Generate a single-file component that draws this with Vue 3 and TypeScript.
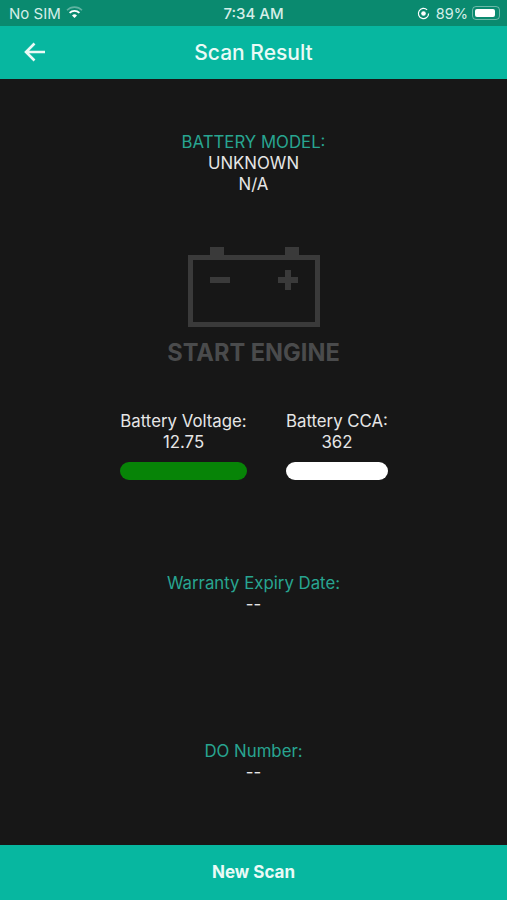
<script setup lang="ts">
const gauges = [
  { label: 'Battery Voltage:', value: '12.75', color: '#078407', width: 127 },
  { label: 'Battery CCA:', value: '362', color: '#ffffff', width: 102 },
]
</script>

<template>
  <div class="screen">
    <div class="status">
      <div class="status-left">
        <span>No SIM</span>
        <svg class="wifi" width="17" height="13" viewBox="0 0 17 13">
          <path d="M1 4.2a10.6 10.6 0 0 1 15 0" fill="none" stroke="#fff" stroke-opacity=".35" stroke-width="1.6" />
          <path d="M3.6 6.9a7 7 0 0 1 9.8 0" fill="none" stroke="#fff" stroke-width="1.8" />
          <path d="M6 9.4a3.6 3.6 0 0 1 5 0l-2.5 2.6z" fill="#fff" />
        </svg>
      </div>
      <span class="time">7:34 AM</span>
      <div class="status-right">
        <svg width="13" height="13" viewBox="0 0 13 13">
          <path d="M11.6 6.5a5.1 5.1 0 1 1-1.5-3.6" fill="none" stroke="#fff" stroke-width="1.2" />
          <circle cx="6.5" cy="6.5" r="2.3" fill="#fff" />
        </svg>
        <span class="pct">89%</span>
        <div class="batt"><div class="batt-fill"></div></div>
      </div>
    </div>

    <header class="bar">
      <svg class="back" width="22" height="20" viewBox="0 0 22 20">
        <path d="M21 10H2M10.5 1.5 2 10l8.5 8.5" fill="none" stroke="#eafaf6" stroke-width="2.6" />
      </svg>
      <h1>Scan Result</h1>
    </header>

    <main class="body">
      <section class="model">
        <div class="accent">BATTERY MODEL:</div>
        <div>UNKNOWN</div>
        <div>N/A</div>
      </section>

      <section class="engine">
        <svg width="133" height="80" viewBox="0 0 133 80">
          <g fill="#3a3a3a">
            <rect x="23" y="0" width="14" height="9" />
            <rect x="98" y="0" width="14" height="9" />
            <path fill-rule="evenodd" d="M1 8h132v72H1zM6 13v62h122V13z" />
            <rect x="23" y="30" width="20" height="6" />
            <rect x="91" y="30" width="20" height="6" />
            <rect x="98" y="23" width="6" height="20" />
          </g>
        </svg>
        <div class="engine-text">START ENGINE</div>
      </section>

      <section class="gauges">
        <div v-for="g in gauges" :key="g.label" class="gauge">
          <div>{{ g.label }}</div>
          <div>{{ g.value }}</div>
          <div class="pill" :style="{ background: g.color, width: g.width + 'px' }"></div>
        </div>
      </section>

      <section class="info warranty">
        <div class="accent">Warranty Expiry Date:</div>
        <div>--</div>
      </section>

      <section class="info number">
        <div class="accent">DO Number:</div>
        <div>--</div>
      </section>
    </main>

    <footer class="scan">New Scan</footer>
  </div>
</template>

<style scoped>
.screen {
  width: 507px;
  height: 900px;
  display: flex;
  flex-direction: column;
  overflow: hidden;
  background: #171717;
  color: #e6e6e6;
  font-family: Inter, "Liberation Sans", sans-serif;
  font-size: 16.8px;
  line-height: 21px;
  text-align: center;
}
.status {
  height: 26px;
  flex: none;
  display: flex;
  align-items: center;
  justify-content: space-between;
  position: relative;
  padding: 0 7px 0 9px;
  background: #0a8a6f;
  color: #d5eee8;
  font-size: 15px;
}
.status-left,
.status-right {
  display: flex;
  align-items: center;
}
.status-left {
  gap: 8px;
}
.wifi {
  margin-top: -1px;
  margin-left: -3px;
}
.status-right {
  gap: 6px;
}
.time {
  position: absolute;
  left: 0;
  right: 0;
  text-align: center;
  font-weight: 500;
}
.pct {
  margin-right: -2px;
  font-size: 14.5px;
}
.batt {
  width: 28px;
  height: 14px;
  padding: 2px;
  box-sizing: border-box;
  border: 1px solid rgba(255, 255, 255, 0.4);
  border-radius: 4px;
}
.batt-fill {
  width: 89%;
  height: 100%;
  background: #fff;
  border-radius: 2px;
}
.bar {
  height: 53px;
  flex: none;
  display: flex;
  align-items: center;
  justify-content: center;
  position: relative;
  background: #07b7a0;
}
.back {
  position: absolute;
  left: 24px;
  top: 16px;
}
h1 {
  margin: 0;
  font-size: 21px;
  font-weight: 500;
  color: #eafaf6;
}
.body {
  flex: 1;
  display: flex;
  flex-direction: column;
  align-items: center;
}
.accent {
  color: #28a591;
}
.model {
  margin-top: 53px;
}
.engine {
  margin-top: 52px;
}
.engine svg {
  display: block;
  margin: 0 auto;
}
.engine-text {
  margin-top: 12px;
  font-size: 23.6px;
  line-height: 28px;
  font-weight: 700;
  color: #4a4b4c;
}
.gauges {
  margin-top: 44px;
  margin-left: 1px;
  display: flex;
  gap: 39px;
}
.gauge {
  display: flex;
  flex-direction: column;
  align-items: center;
}
.pill {
  height: 18px;
  margin-top: 9px;
  border-radius: 9px;
}
.warranty {
  margin-top: 93px;
}
.number {
  margin-top: 126px;
}
.scan {
  height: 55px;
  flex: none;
  display: flex;
  align-items: center;
  justify-content: center;
  background: #07b7a0;
  color: #eafaf6;
  font-size: 17px;
  font-weight: 700;
}
</style>
